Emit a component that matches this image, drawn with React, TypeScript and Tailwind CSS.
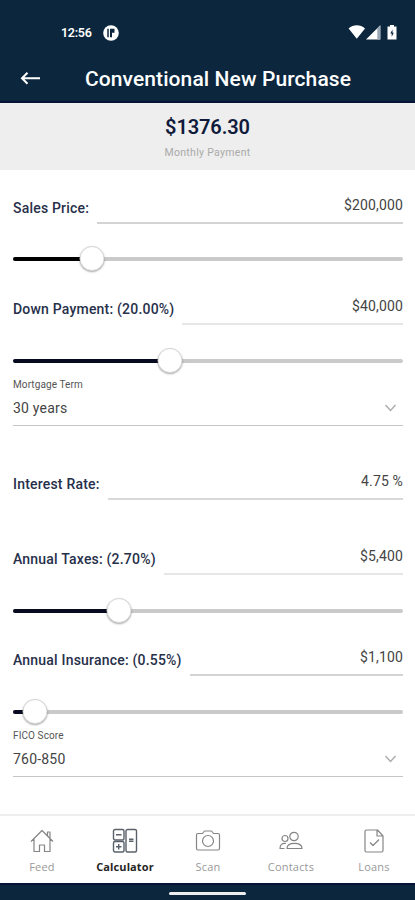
import type { ReactNode } from 'react'
import { clsx } from 'clsx'

function StatusBar() {
  return (
    <div className="flex h-[54px] items-end px-[17px] pb-[13px] text-white">
      <span className="ml-[44px] w-[30px] whitespace-nowrap text-[12.5px] leading-4 font-semibold tracking-[-0.3px]">12:56</span>
      <svg className="ml-[12px]" width="16" height="16" viewBox="0 0 16 16">
        <circle cx="8" cy="8" r="7.8" fill="#fff" />
        <path d="M5 3.800v8.400" fill="none" stroke="#0b263d" strokeWidth="1.500" />
        <path d="M7 3.800h4.500v4H9v4.400H7Z" fill="#0b263d" />
      </svg>
      <svg className="ml-auto" width="50" height="17" viewBox="0 0 50 17">
        <path d="M.6 4.6C5.3.2 12.300.2 17 4.600L8.800 14.800Z" fill="#fff" />
        <path d="M32.300 1.200V15.500H18Z" fill="#fff" />
        <path d="M29.300 4.200L32.300 1.200V15.500H29.300Z" fill="#9aa7b4" />
        <path d="M39.500 2.500h2.500V1h4v1.500h2.500v13h-9Z" fill="#fff" />
        <path d="M44.500 5.500L42.300 9.500h1.400v3.200l2.100-4h-1.300Z" fill="#0b263d" />
      </svg>
    </div>
  )
}

function Header() {
  return (
    <header className="h-[103px] border-b-2 border-[#071437] bg-[#0b263d]">
      <StatusBar />
      <div className="relative flex h-[49px] items-center justify-center">
        <svg className="absolute top-[17px] left-[20px]" width="21" height="14" viewBox="0 0 21 14" fill="none" stroke="#fff" strokeWidth="2">
          <path d="M20 7.300H2M7.500 1.800L2 7.300l5.500 5.500" />
        </svg>
        <h1 className="ml-[21px] whitespace-nowrap pt-[2px] text-[21px] font-medium tracking-[0.1px] text-white">Conventional New Purchase</h1>
      </div>
    </header>
  )
}

function Field({ label, value, line }: { label: string; value: string; line: string }) {
  return (
    <div className="flex h-[34px]">
      <span className="mr-[8px] whitespace-nowrap pt-[8px] text-[14px] leading-5 font-medium tracking-[0.2px] text-[#27304a]">{label}</span>
      <span className={clsx('flex-1 whitespace-nowrap border-b-2 pt-[5px] text-right text-[14px] leading-5 tracking-[0.15px] text-[#444]', line)}>{value}</span>
    </div>
  )
}

function Slider({ at, fill }: { at: number; fill: string }) {
  return (
    <div className="relative flex h-[25px] items-center">
      <div className="h-[4px] w-full overflow-hidden rounded-full bg-[#cacaca]">
        <div className={clsx('h-full', fill)} style={{ width: at }} />
      </div>
      <div className="absolute top-0 size-[25px] -translate-x-1/2 rounded-full border border-[#d6d6d6] bg-white shadow-[0_1px_2px_rgba(0,0,0,0.35)]" style={{ left: at }} />
    </div>
  )
}

function Select({ label, value }: { label: string; value: string }) {
  return (
    <div className="h-[48px] border-b border-[#c6c6c6]">
      <div className="h-[14px] text-[10px] leading-[14px] tracking-[0.1px] text-[#555]">{label}</div>
      <div className="mt-[6px] flex h-5 items-center justify-between">
        <span className="text-[14px] leading-5 tracking-[0.2px] text-[#444]">{value}</span>
        <svg className="mr-[6px]" width="13" height="8" viewBox="0 0 13 8" fill="none" stroke="#aaa" strokeWidth="1.300">
          <path d="M1.500 1l5 5.500 5-5.500" />
        </svg>
      </div>
    </div>
  )
}

function NavItem({ label, active, children }: { label: string; active?: boolean; children: ReactNode }) {
  return (
    <button className="flex flex-1 flex-col items-center pt-[12px]">
      <svg width="26" height="26" viewBox="0 0 26 26" fill="none" stroke={active ? '#59616a' : '#858585'} strokeWidth={active ? 1.4 : 1.2} strokeLinejoin="round">
        {children}
      </svg>
      <span className={clsx("font-['Open_Sans',sans-serif] text-[11px] leading-4 mt-[5px] ml-px whitespace-nowrap", active ? 'font-bold tracking-[0.1px] text-[#252525]' : 'tracking-[0.2px] text-[#999]')}>{label}</span>
    </button>
  )
}

function BottomNav() {
  return (
    <nav className="flex h-[69px] border-t-2 border-[#eee] bg-white">
      <NavItem label="Feed">
        <path d="M2 13.500L13 2.500l11 11M5 11v12.500h5.500V17h5v6.500H21V11M18.500 7.500V4H21v6" />
      </NavItem>
      <NavItem label="Calculator" active>
        <rect x="1.500" y="1.500" width="10.500" height="10.500" rx="1.500" />
        <rect x="1.500" y="13.500" width="10.500" height="10.500" rx="1.500" />
        <rect x="14" y="1.500" width="10.500" height="22.500" rx="1.500" />
        <path d="M4 6.700h5.500M4 18.700h5.500M6.700 16v5.500M17 11.300h4.500M17 13.300h4.500" />
      </NavItem>
      <NavItem label="Scan">
        <path d="M3 5.500h4.500l2-2.500h7l2 2.500H23a1.500 1.500 0 0 1 1.500 1.500v13.500A1.500 1.500 0 0 1 23 22H3a1.500 1.500 0 0 1-1.500-1.500V7A1.500 1.500 0 0 1 3 5.500Z" />
        <circle cx="13" cy="13" r="5.500" />
      </NavItem>
      <NavItem label="Contacts">
        <circle cx="16" cy="8.500" r="4.200" />
        <circle cx="7" cy="10.500" r="3" />
        <path d="M9 20.500c0-3.500 3-5.200 7.500-5.200s7.500 1.700 7.500 5.200ZM8 15.500c-4-.5-6 1.200-6 5h4.500" />
      </NavItem>
      <NavItem label="Loans">
        <path d="M16.500 2H5.500A1.500 1.500 0 0 0 4 3.500v19A1.500 1.500 0 0 0 5.500 24h15a1.500 1.500 0 0 0 1.500-1.500V8ZM16 2v6H22M9 14.500l3 3 6-6" />
      </NavItem>
    </nav>
  )
}

export default function App() {
  return (
    <div className="flex h-[900px] w-[415px] flex-col overflow-hidden bg-white font-[Roboto,sans-serif]">
      <Header />

      <section className="flex h-[67px] flex-col items-center bg-[#eee]">
        <div className="mt-[11px] text-[20px] leading-[26px] font-semibold tracking-[-0.1px] text-[#101b3c]">$1376.30</div>
        <div className="mt-[6px] text-[10.5px] leading-[14px] tracking-[0.3px] text-[#aaa]">Monthly Payment</div>
      </section>

      <main className="flex flex-1 flex-col pt-[20px] pr-[12px] pl-[13px]">
        <Field label="Sales Price:" value="$200,000" line="border-[#d4d4d4]" />
        <div className="mt-[22px]"><Slider at={78.5} fill="bg-black" /></div>

        <div className="mt-[20px]"><Field label="Down Payment: (20.00%)" value="$40,000" line="border-[#e6e6e6]" /></div>
        <div className="mt-[23px]"><Slider at={156.5} fill="bg-[#080a20]" /></div>
        <div className="mt-[5px]"><Select label="Mortgage Term" value="30 years" /></div>

        <div className="mt-[40px]"><Field label="Interest Rate:" value="4.75 %" line="border-[#d9d9d9]" /></div>

        <div className="mt-[41px]"><Field label="Annual Taxes: (2.70%)" value="$5,400" line="border-[#e6e6e6]" /></div>
        <div className="mt-[23px]"><Slider at={105.5} fill="bg-[#080a20]" /></div>

        <div className="mt-[19px]"><Field label="Annual Insurance: (0.55%)" value="$1,100" line="border-[#d4d4d4]" /></div>
        <div className="mt-[23px]"><Slider at={22} fill="bg-[#080a20]" /></div>
        <div className="mt-[5px]"><Select label="FICO Score" value="760-850" /></div>
      </main>

      <BottomNav />
      <div className="flex h-[17px] justify-center border-t-2 border-[#071437] bg-[#0b263d] pt-[7px]">
        <div className="h-[3px] w-[77px] rounded-full bg-[#eee]" />
      </div>
    </div>
  )
}
